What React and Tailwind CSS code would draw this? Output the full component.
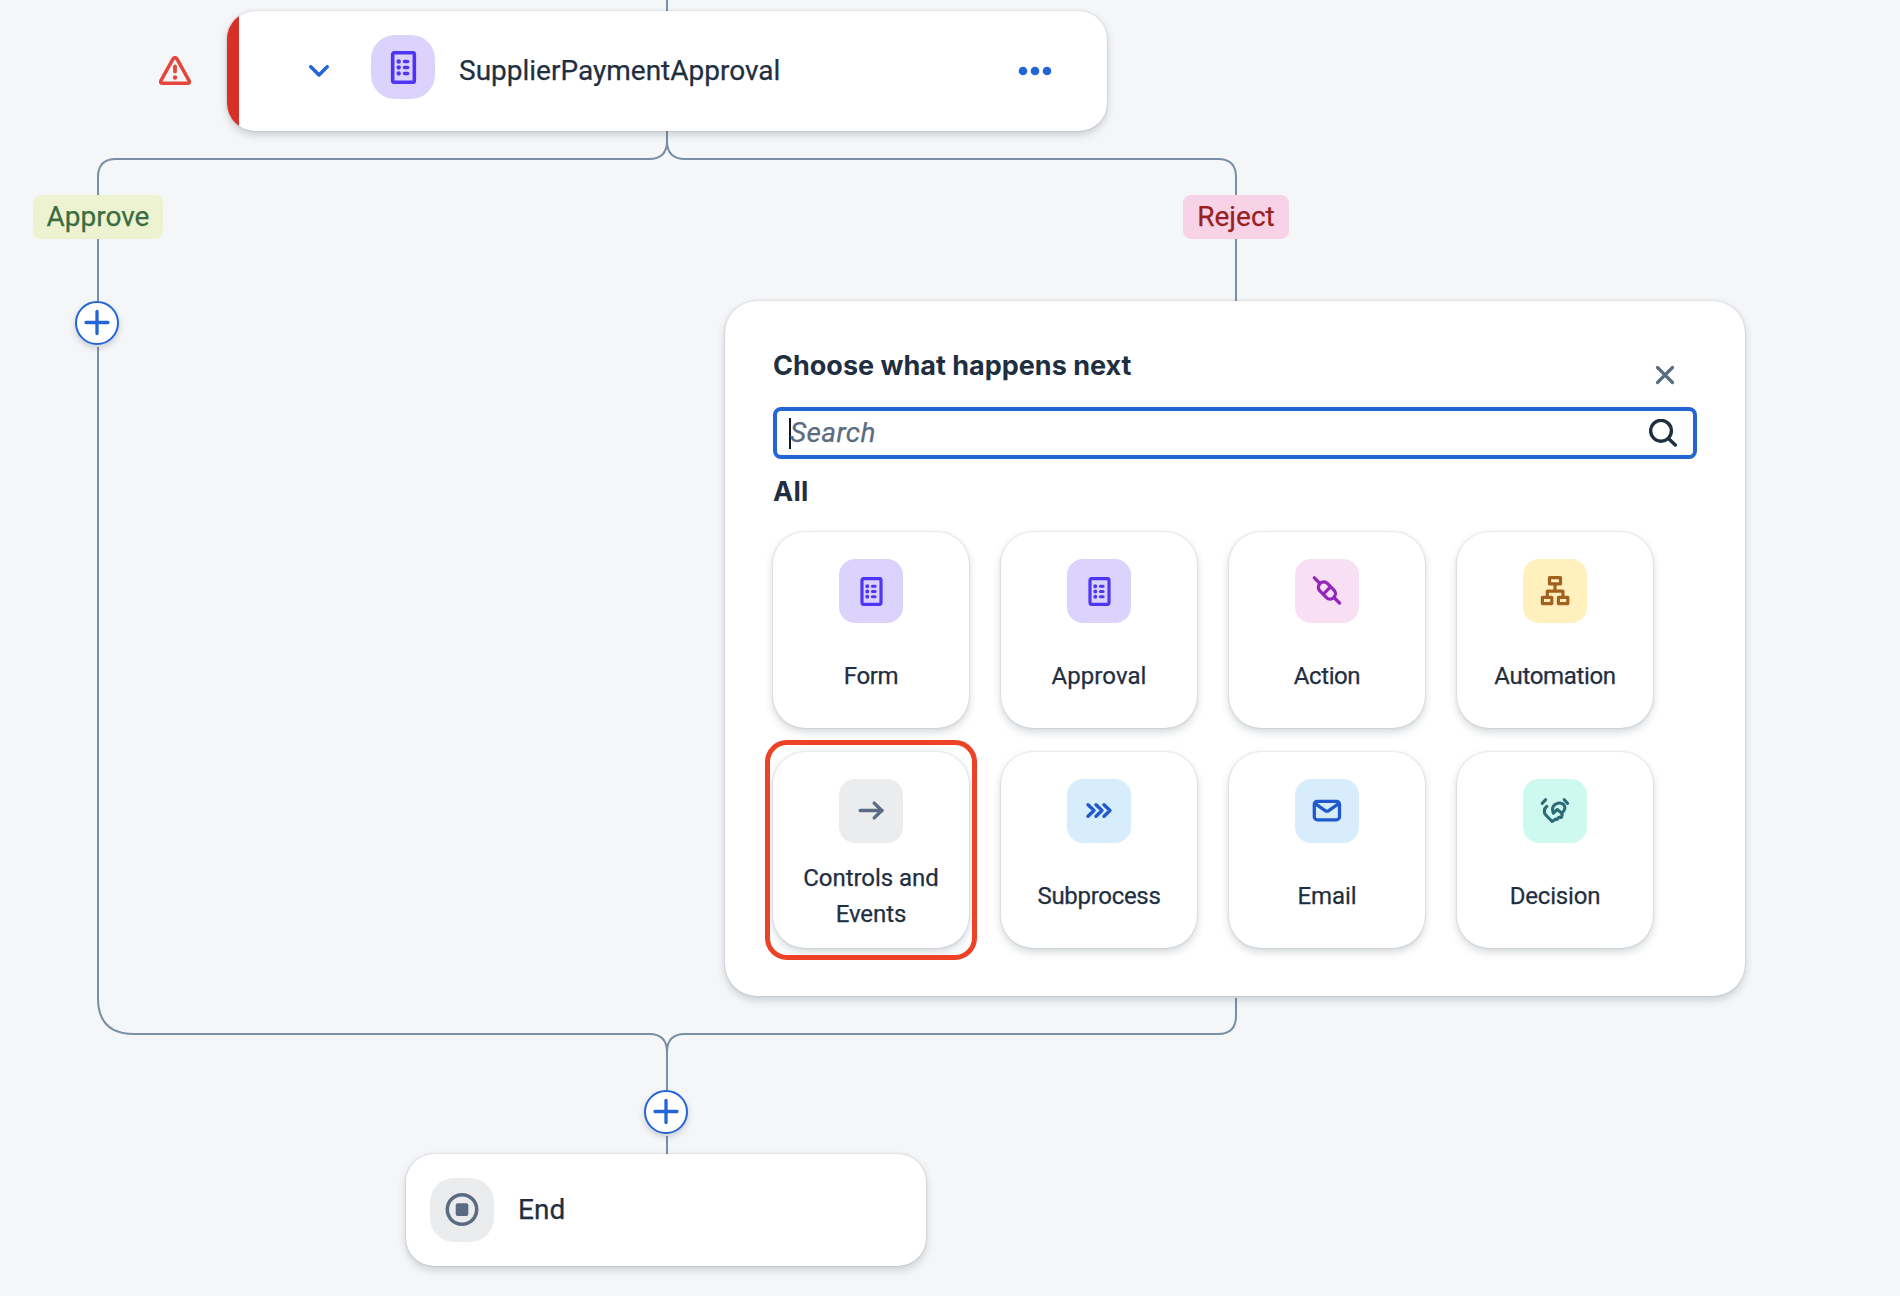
import React from 'react';

const DocIcon = ({ size }) => (
  <svg width={size} height={size} viewBox="0 0 32 32" fill="none" stroke="#4f36f5" strokeLinecap="round">
    <rect x="5.5" y="1.7" width="21" height="28.6" rx="1.8" strokeWidth="3.5" />
    <path d="M11.3 10.2h.1M11.3 16h.1M11.3 21.8h.1" strokeWidth="4.2" />
    <path d="M17 10.2h3M17 16h3M17 21.8h3" strokeWidth="3.4" />
  </svg>
);

const PlugIcon = () => (
  <svg width="32" height="32" viewBox="0 0 32 32" fill="none" stroke="#9326bb" strokeWidth="3.3" strokeLinecap="round" strokeLinejoin="round">
    <path d="M3.3 2.8l5.2 5.2M23.5 23l5 5" />
    <rect x="6.2" y="10.2" width="19.4" height="10.6" rx="5" transform="rotate(45 15.9 15.5)" />
    <path d="M12.6 18.8l6.6-6.6" />
  </svg>
);

const TreeIcon = () => (
  <svg width="32" height="32" viewBox="0 0 32 32" fill="none" stroke="#a2621f" strokeWidth="3.2" strokeLinejoin="round">
    <rect x="10.5" y="2.7" width="11" height="6.2" />
    <rect x="3.4" y="22.4" width="9.4" height="6.2" />
    <rect x="19.4" y="22.4" width="9.4" height="6.2" />
    <path d="M16 9v7M8.3 22v-5.9h15.6V22" />
  </svg>
);

const ArrowIcon = () => (
  <svg width="32" height="32" viewBox="0 0 32 32" fill="none" stroke="#5b6c82" strokeWidth="3.4" strokeLinecap="round" strokeLinejoin="round">
    <path d="M5.2 15.5h22M19.2 8.1l7.6 7.4-7.6 7.4" />
  </svg>
);

const ChevronsIcon = () => (
  <svg width="32" height="32" viewBox="0 0 32 32" fill="none" stroke="#2059cf" strokeWidth="3.4" strokeLinecap="round" strokeLinejoin="round">
    <path d="M5 9.7l6 5.800-6 5.800M13 9.7l6 5.800-6 5.800M21 9.700l6 5.800-6 5.800" />
  </svg>
);

const MailIcon = () => (
  <svg width="32" height="32" viewBox="0 0 32 32" fill="none" stroke="#2059cf" strokeWidth="3.3" strokeLinecap="round" strokeLinejoin="round">
    <rect x="3.3" y="6.4" width="25.2" height="18.4" rx="3" />
    <path d="M4.2 8.6l10 7c1.1.7 2.4.7 3.5 0l10-7" />
  </svg>
);

const HandshakeIcon = () => (
  <svg width="32" height="32" viewBox="0 0 32 32" fill="none" stroke="#2c6b77" strokeWidth="3.1" strokeLinecap="round" strokeLinejoin="round">
    <path d="M3.2 8.4l3.4-3.7M25.2 4.7l3.4 3.7" />
    <path d="M7.8 11.3C4.6 14 4.6 17.8 7 20.3l6.1 6.2 3.6-2.4 1.5.3 1.6-2.2 2.5.2.9-2.6-.6-1.7" />
    <path d="M22.6 18.1l-4.3-3.6-3.9 3.6c-.9-2.4-1.3-5.200.2-7.300 2-2.800 6.200-3.500 9-1.900 2.600 1.500 2.900 4.500 1.200 7.100z" />
  </svg>
);

const TILES = [
  { name: 'Form', bg: 'bg-[#dcd3fd]', track: 'tracking-[-0.4px]', icon: <DocIcon size={29} /> },
  { name: 'Approval', bg: 'bg-[#dcd3fd]', track: 'tracking-[0.05px]', icon: <DocIcon size={29} /> },
  { name: 'Action', bg: 'bg-[#f9dff3]', track: 'tracking-[-0.4px]', icon: <PlugIcon /> },
  { name: 'Automation', bg: 'bg-[#fff0bd]', track: 'tracking-[-0.35px]', icon: <TreeIcon /> },
  { name: 'Controls and Events', bg: 'bg-[#eaecee]', track: 'tracking-[-0.05px]', icon: <ArrowIcon />, marked: true },
  { name: 'Subprocess', bg: 'bg-[#d7edfc]', track: 'tracking-[-0.3px]', icon: <ChevronsIcon /> },
  { name: 'Email', bg: 'bg-[#d7edfc]', track: 'tracking-[-0.1px]', icon: <MailIcon /> },
  { name: 'Decision', bg: 'bg-[#cdf9ef]', track: 'tracking-[-0.2px]', icon: <HandshakeIcon /> },
];

const AddButton = ({ className }) => (
  <button className={`absolute flex size-11 items-center justify-center rounded-full border-2 border-[#2465d6] bg-white shadow-[0_3px_6px_rgba(34,53,72,0.2)] ${className}`}>
    <svg width="28" height="28" viewBox="0 0 28 28" stroke="#2465d6" strokeWidth="3.3" strokeLinecap="round">
      <path d="M14 2.5v22M3 13.5h22" />
    </svg>
  </button>
);

export default function App() {
  return (
    <main className="relative h-[1296px] w-[1900px] overflow-hidden bg-[#f5f6f8] font-['Roboto',sans-serif] text-[#1f2f41] [-webkit-text-stroke:0.25px]">
      <svg className="absolute inset-0" width="1900" height="1296" fill="none" stroke="#788fa6" strokeWidth="2">
        <path d="M667 0V11" />
        <path d="M667 131V141Q667 159 649 159H116Q98 159 98 177V301" />
        <path d="M667 131V141Q667 159 685 159H1218Q1236 159 1236 177V301" />
        <path d="M98 347V998Q98 1034 134 1034H649Q667 1034 667 1052V1090" />
        <path d="M1236 998V1016Q1236 1034 1218 1034H685Q667 1034 667 1052" />
        <path d="M667 1136V1154" />
      </svg>

      <svg className="absolute left-[159px] top-[56px]" width="32" height="30" viewBox="0 0 32 30" fill="none" stroke="#e5453b" strokeWidth="3.5" strokeLinecap="round" strokeLinejoin="round">
        <path d="M13.9 3.2 2.1 24.300q-1.500 3 1.700 3h24.400q3.200 0 1.700-3L18.100 3.200q-2.100-3.200-4.200 0z" />
        <path d="M16 10.500v5" strokeWidth="3.800" />
        <path d="M16 21.500v.1" strokeWidth="4.400" />
      </svg>

      <section className="absolute left-[227px] top-[11px] flex h-[120px] w-[880px] items-center overflow-hidden rounded-[28px] bg-white shadow-[0_0_2px_rgba(34,53,72,0.25),0_4px_8px_rgba(34,53,72,0.2)]">
        <div className="h-full w-3 shrink-0 bg-[#d83027]" />
        <svg className="ml-[70px] shrink-0" width="20" height="12" viewBox="0 0 20 12" fill="none" stroke="#2465d6" strokeWidth="3.5" strokeLinecap="round" strokeLinejoin="round">
          <path d="M1.800 1.800 10 10l8.200-8.200" />
        </svg>
        <div className="mb-2 ml-[42px] flex size-16 shrink-0 items-center justify-center rounded-3xl bg-[#dcd3fd]">
          <DocIcon size={33} />
        </div>
        <h2 className="ml-6 text-[28px] leading-9">SupplierPaymentApproval</h2>
        <svg className="ml-auto mr-[55px]" width="34" height="10" viewBox="0 0 34 10" fill="#2465d6">
          <circle cx="5" cy="5" r="4.3" /><circle cx="17" cy="5" r="4.3" /><circle cx="29" cy="5" r="4.3" />
        </svg>
      </section>

      <span className="absolute left-[33px] top-[195px] flex h-11 w-[130px] items-center justify-center rounded-lg bg-[#edf3d0] text-[28px] text-[#3a6c3f]">Approve</span>
      <span className="absolute left-[1183px] top-[195px] flex h-11 w-[106px] items-center justify-center rounded-lg bg-[#f8d2e7] text-[28px] text-[#98201d]">Reject</span>

      <AddButton className="left-[75px] top-[301px]" />
      <AddButton className="left-[644px] top-[1090px]" />

      <section className="absolute left-[725px] top-[301px] flex h-[695px] w-[1020px] flex-col rounded-[32px] bg-white px-12 pt-12 shadow-[0_0_2px_rgba(34,53,72,0.25),0_4px_8px_rgba(34,53,72,0.2)]">
        <header className="flex h-[58px] items-start justify-between pr-[22px]">
          <h2 className="pt-px font-['Inter',sans-serif] text-[27px] font-bold leading-8 [-webkit-text-stroke:0]">Choose what happens next</h2>
          <svg className="mt-4" width="20" height="20" viewBox="0 0 20 20" stroke="#5b6c82" strokeWidth="3.2" strokeLinecap="round">
            <path d="M2.5 2.5l15 15M17.5 2.5l-15 15" />
          </svg>
        </header>
        <div className="flex h-[52px] items-center rounded-lg border-4 border-[#2465d6] pl-3 pr-4">
          <div className="h-[31px] w-0.5 bg-[#0f1720]" />
          <span className="-ml-px grow text-[28px] italic tracking-[0.4px] text-[#5b6c82]">Search</span>
          <svg width="28" height="28" viewBox="0 0 28 28" fill="none" stroke="#1f2f41" strokeWidth="3.4" strokeLinecap="round">
            <circle cx="12" cy="11.8" r="10.4" /><path d="M20 20l6.3 6" />
          </svg>
        </div>
        <h3 className="mt-[17px] font-['Inter',sans-serif] text-[27px] font-bold leading-8 tracking-[0.3px] [-webkit-text-stroke:0]">All</h3>
        <div className="mt-6 grid grid-cols-[repeat(4,196px)] gap-x-8 gap-y-6">
          {TILES.map((t) => (
            <button key={t.name} className="relative flex h-[196px] flex-col items-center rounded-[32px] bg-white px-5 pt-[27px] shadow-[0_0_2px_rgba(34,53,72,0.25),0_4px_8px_rgba(34,53,72,0.2)]">
              <span className={`flex size-16 items-center justify-center rounded-2xl ${t.bg}`}>{t.icon}</span>
              <span className={`mt-[17px] flex h-[72px] items-center text-center text-[24px] leading-9 ${t.track}`}>{t.name}</span>
              {t.marked && <span className="absolute -bottom-3 -left-2 -right-2 -top-3 rounded-[22px] border-[5px] border-[#ee4226]" />}
            </button>
          ))}
        </div>
      </section>

      <section className="absolute left-[406px] top-[1154px] flex h-[112px] w-[520px] items-center gap-6 rounded-[28px] bg-white pl-6 shadow-[0_0_2px_rgba(34,53,72,0.25),0_4px_8px_rgba(34,53,72,0.2)]">
        <div className="flex size-16 items-center justify-center rounded-3xl bg-[#eaecee]">
          <svg width="34" height="34" viewBox="0 0 34 34" fill="none" stroke="#5b6c82">
            <circle cx="17" cy="16.5" r="14.700" strokeWidth="3.500" />
            <rect x="10.700" y="10.300" width="12.600" height="12.600" rx="2" fill="#5b6c82" stroke="none" />
          </svg>
        </div>
        <h2 className="text-[28px]">End</h2>
      </section>
    </main>
  );
}
